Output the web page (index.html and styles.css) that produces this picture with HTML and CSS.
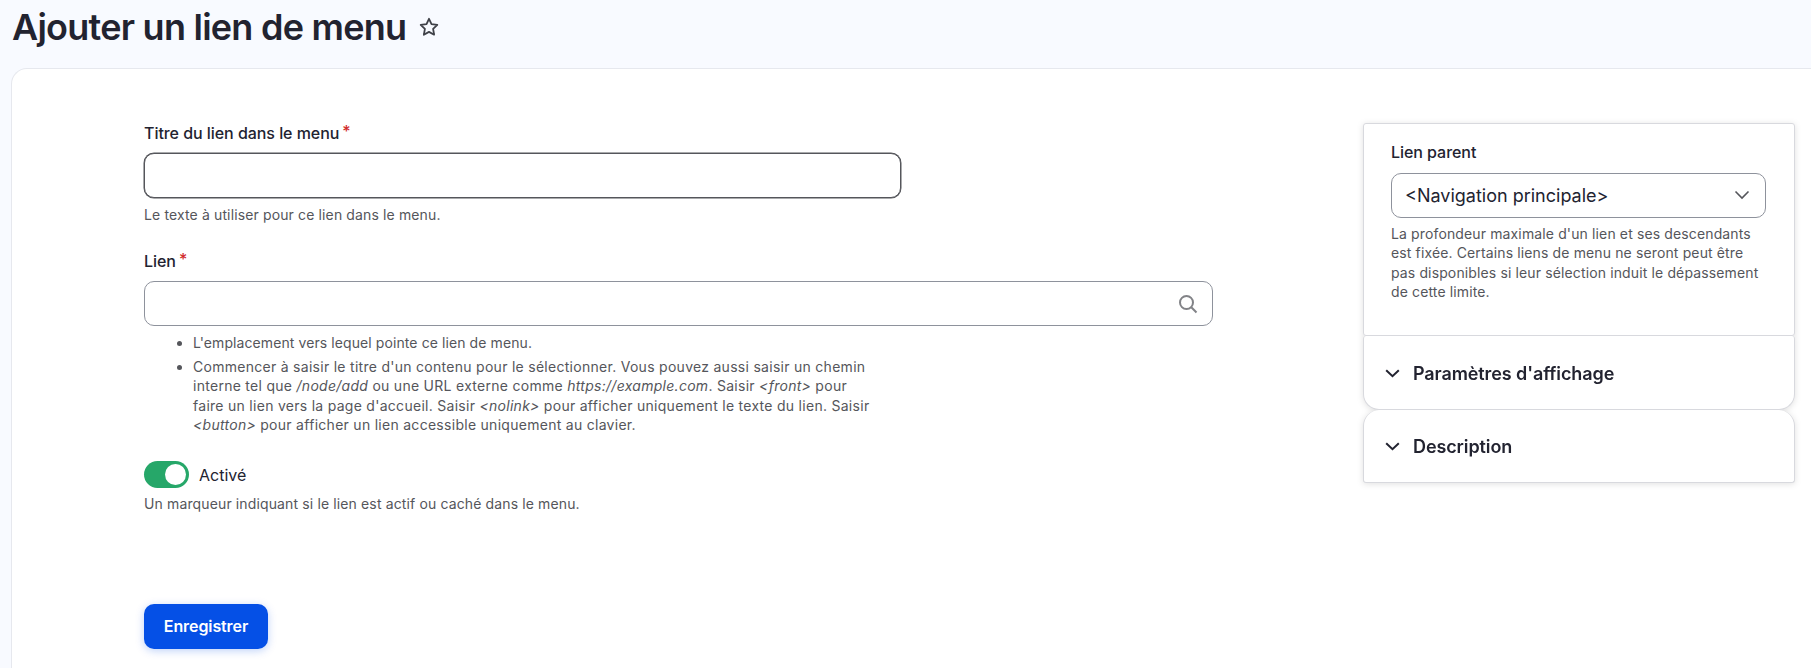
FILE: index.html
```html
<!DOCTYPE html>
<html lang="fr">
<head>
<meta charset="utf-8">
<title>Ajouter un lien de menu</title>
<link rel="stylesheet" href="styles.css">
</head>
<body>
<header class="page-head">
  <h1 class="page-title">Ajouter un lien de menu</h1>
  <svg class="star" width="20" height="20" viewBox="0 0 20 20" aria-hidden="true"><path d="M10 1.8l2.5 5.3 5.8.8-4.2 4 1 5.8-5.1-2.8-5.1 2.8 1-5.8-4.2-4 5.8-.8z" fill="none" stroke="#3f4148" stroke-width="1.8" stroke-linejoin="round"/></svg>
</header>
<main class="card">
  <form class="form-main">
    <div class="field field-title">
      <label class="label">Titre du lien dans le menu<span class="req">*</span></label>
      <input class="input input-focus" type="text">
      <p class="help">Le texte à utiliser pour ce lien dans le menu.</p>
    </div>
    <div class="field field-link">
      <label class="label">Lien<span class="req">*</span></label>
      <div class="search-wrap">
        <input class="input" type="text">
        <svg class="search-icon" width="20" height="20" viewBox="0 0 20 20" aria-hidden="true"><circle cx="8.5" cy="8.5" r="6.5" fill="none" stroke="#828387" stroke-width="2"/><path d="M13.3 13.3l5.2 5.2" stroke="#828387" stroke-width="2" fill="none"/></svg>
      </div>
      <ul class="help-list">
        <li class="li-short">L'emplacement vers lequel pointe ce lien de menu.</li>
        <li class="li-long">Commencer à saisir le titre d'un contenu pour le sélectionner. Vous pouvez aussi saisir un chemin interne tel que <em>/node/add</em> ou une URL externe comme <em>https://example.com</em>. Saisir <em>&lt;front&gt;</em> pour faire un lien vers la page d'accueil. Saisir <em>&lt;nolink&gt;</em> pour afficher uniquement le texte du lien. Saisir <em>&lt;button&gt;</em> pour afficher un lien accessible uniquement au clavier.</li>
      </ul>
    </div>
    <div class="field field-toggle">
      <div class="toggle-row">
        <span class="toggle"><span class="knob"></span></span>
        <span class="toggle-label">Activé</span>
      </div>
      <p class="help">Un marqueur indiquant si le lien est actif ou caché dans le menu.</p>
    </div>
    <button class="btn" type="button">Enregistrer</button>
  </form>
  <aside class="side">
    <section class="panel panel-parent">
      <label class="label label-side">Lien parent</label>
      <div class="select-wrap">
        <select class="select"><option>&lt;Navigation principale&gt;</option></select>
        <svg class="select-chev" width="16" height="10" viewBox="0 0 16 10" aria-hidden="true"><path d="M1.5 1.5L8 8l6.5-6.5" fill="none" stroke="#55565b" stroke-width="1.6"/></svg>
      </div>
      <p class="help help-side">La profondeur maximale d'un lien et ses descendants est fixée. Certains liens de menu ne seront peut être pas disponibles si leur sélection induit le dépassement de cette limite.</p>
    </section>
    <section class="panel panel-acc panel-acc-a">
      <svg class="acc-chev" width="15" height="9" viewBox="0 0 15 9" aria-hidden="true"><path d="M1.2 1.2L7.5 7.2l6.3-6" fill="none" stroke="#222330" stroke-width="2"/></svg>
      <span class="acc-title">Paramètres d'affichage</span>
    </section>
    <section class="panel panel-acc panel-acc-b">
      <svg class="acc-chev" width="15" height="9" viewBox="0 0 15 9" aria-hidden="true"><path d="M1.2 1.2L7.5 7.2l6.3-6" fill="none" stroke="#222330" stroke-width="2"/></svg>
      <span class="acc-title">Description</span>
    </section>
  </aside>
</main>
</body>
</html>
```
FILE: styles.css
```css
* { box-sizing: border-box; }
html, body { height: 100%; }
body {
  margin: 0;
  background: #f8faff;
  font-family: Inter, "Liberation Sans", sans-serif;
  color: #222330;
  overflow: hidden;
}
.page-head {
  display: flex;
  align-items: center;
  gap: 13px;
  height: 68px;
  padding: 0 0 14px 12px;
}
.page-title {
  margin: 0;
  font-size: 36px;
  line-height: 54px;
  font-weight: 600;
  letter-spacing: -0.75px;
}
.star { flex: none; }
.card {
  display: flex;
  justify-content: space-between;
  margin-left: 11px;
  height: 620px;
  padding: 54px 16px 0 132px;
  background: #fff;
  border: 1px solid #e6e8ee;
  border-right: 0;
  border-radius: 16px 0 0 0;
}
.form-main { width: 1069px; }
.label {
  display: block;
  font-size: 16px;
  line-height: 20px;
  font-weight: 500;
  height: 20px;
  letter-spacing: -.05px;
}
.req { color: #d12b2b; margin-left: 3px; position: relative; top: -2px; }
.input {
  display: block;
  width: 100%;
  height: 45px;
  border: 1px solid #8e929c;
  border-radius: 10px;
  background: #fff;
  outline: 0;
}
.input-focus { border-color: #55565b; box-shadow: 0 0 0 .5px #55565b; }
.help {
  margin: 0;
  font-size: 14px;
  line-height: 20px;
  letter-spacing: .13px;
  color: #55565b;
}
.field-title { width: 757px; }
.field-title .label { margin-bottom: 10px; }
.field-title .help { margin-top: 7px; }
.field-link { margin-top: 26px; }
.field-link .label { margin-bottom: 10px; }
.search-wrap { position: relative; }
.search-icon { position: absolute; right: 15px; top: 13px; }
.help-list {
  width: 730px;
  margin: 7px 0 0;
  padding: 0 0 0 49px;
  font-size: 14px;
  line-height: 19.5px;
  color: #55565b;
}
.help-list li { margin-bottom: 4px; }
.li-short { letter-spacing: .09px; }
.li-long { letter-spacing: .28px; }
.field-toggle { margin-top: 25.5px; }
.toggle-row { display: flex; align-items: center; gap: 10px; height: 28px; }
.toggle {
  display: flex;
  justify-content: flex-end;
  align-items: center;
  width: 45px;
  height: 27px;
  padding-right: 3px;
  border-radius: 14px;
  background: #26a769;
}
.knob { width: 21px; height: 21px; border-radius: 50%; background: #fff; }
.toggle-label { font-size: 16px; position: relative; top: 1px; }
.field-toggle .help { margin-top: 6px; }
.btn {
  display: block;
  width: 124px;
  height: 45px;
  margin-top: 90px;
  padding: 0 0 2px;
  border: 0;
  border-radius: 10px;
  background: #0550e6;
  color: #fff;
  font: 600 16px Inter, "Liberation Sans", sans-serif;
  letter-spacing: -.1px;
  box-shadow: 0 2px 8px rgba(5, 80, 230, .25);
}
.side { width: 432px; filter: drop-shadow(0 1px 3px rgba(0, 0, 0, .12)); }
.panel { background: #fff; border: 1px solid #d8d9de; }
.panel-parent { height: 213px; padding: 18px 27px; border-radius: 3px; }
.label-side { margin-bottom: 11px; }
.select-wrap { position: relative; }
.select {
  display: block;
  width: 375px;
  height: 45px;
  padding: 0 13px;
  appearance: none;
  background: #fff;
  border: 1px solid #8e929c;
  border-radius: 10px;
  font: 400 18px Inter, "Liberation Sans", sans-serif;
  letter-spacing: 0;
  color: #222330;
}
.select-chev { position: absolute; right: 17px; top: 17px; }
.help-side { margin-top: 6px; line-height: 19.3px; }
.panel-acc {
  display: flex;
  align-items: center;
  gap: 13px;
  padding-left: 21px;
  height: 74px;
}
.panel-acc-a { border-top: 0; border-radius: 3px 3px 16px 16px; padding-top: 2px; }
.panel-acc-b { border-top: 0; height: 73px; border-radius: 16px 16px 3px 3px; }
.acc-title { font-size: 18px; font-weight: 600; letter-spacing: -.1px; }
```
